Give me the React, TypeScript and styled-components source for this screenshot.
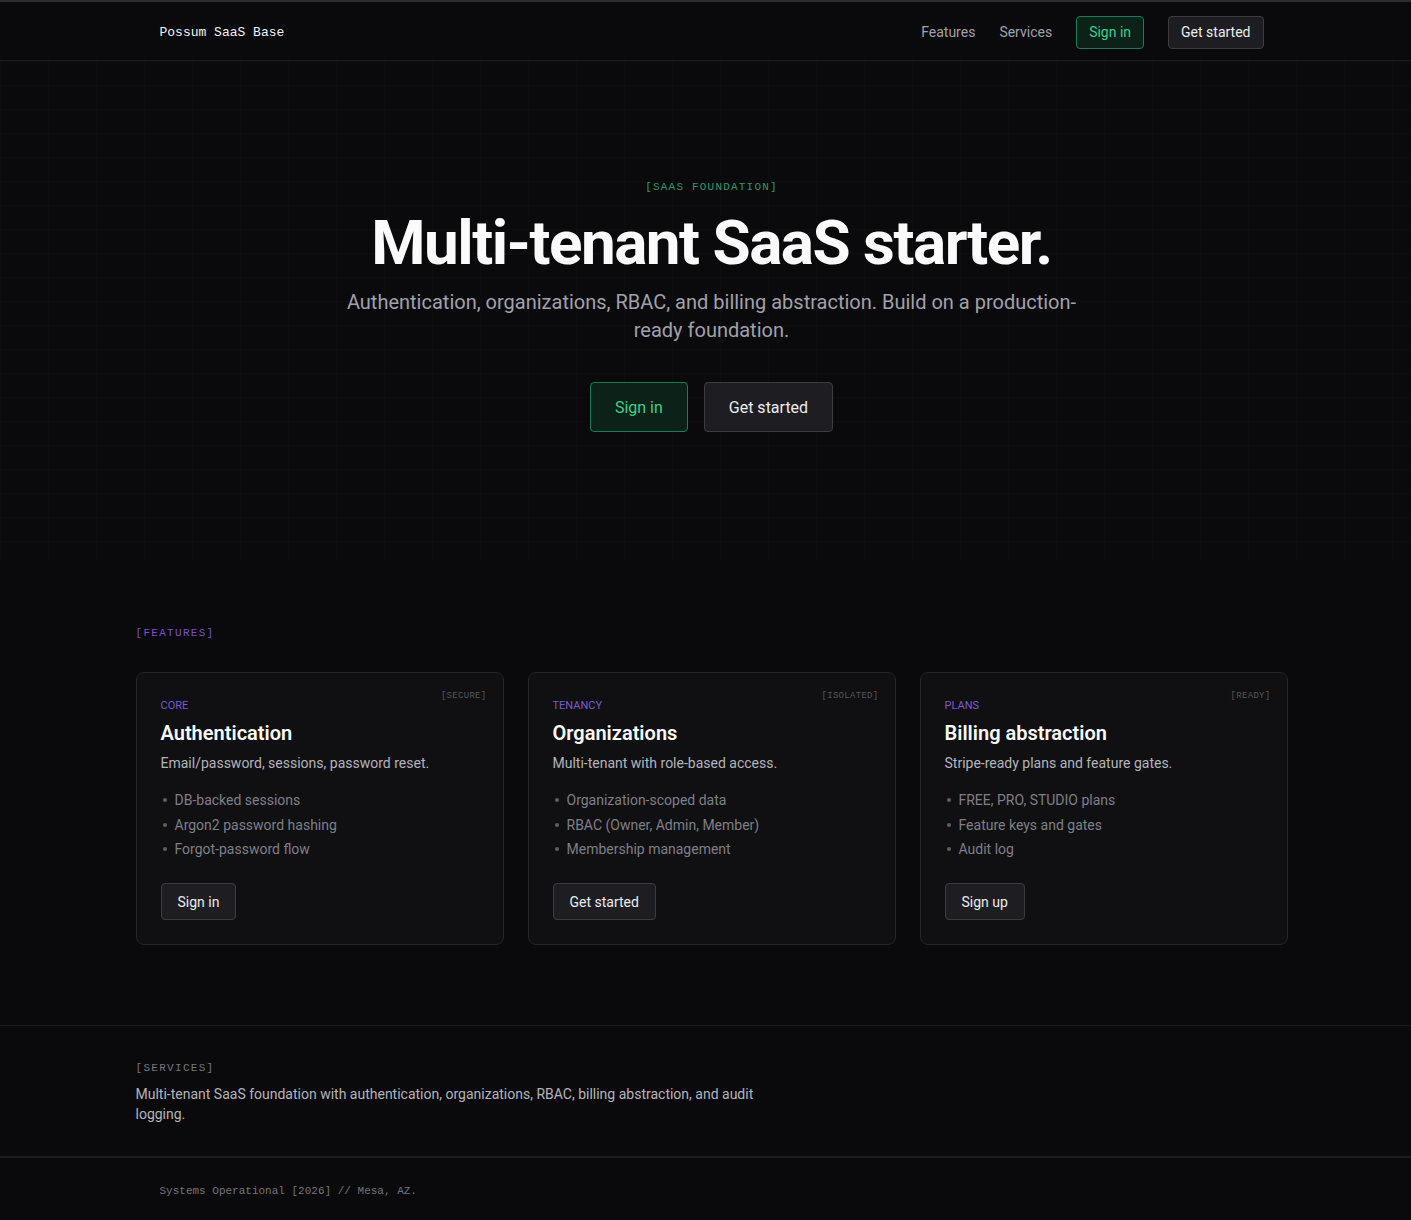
import React from 'react';
import styled, { createGlobalStyle } from 'styled-components';

const GlobalStyle = createGlobalStyle`
  * { box-sizing: border-box; }
  html, body {
    margin: 0;
    padding: 0;
    background: #0a0a0c;
    color: #ededf0;
    font-family: 'Segoe UI', Roboto, 'Noto Sans', sans-serif;
  }
  body { border-top: 2px solid #2c2c30; }
`;

const mono = `'Liberation Mono', 'DejaVu Sans Mono', monospace`;

const Container = styled.div`
  width: 1152px;
  margin-left: calc(50% - 570px);
`;

const Header = styled.header`
  height: 59px;
  border-bottom: 1px solid #1b1b1f;
`;

const HeaderInner = styled(Container)`
  height: 100%;
  padding: 2px 24px 0;
  display: flex;
  align-items: center;
  justify-content: space-between;
`;

const Logo = styled.a`
  font-family: ${mono};
  font-size: 13px;
  color: #f4f4f5;
  text-decoration: none;
`;

const Nav = styled.nav`
  display: flex;
  align-items: center;
  gap: 24px;
`;

const NavLink = styled.a`
  font-size: 14px;
  color: #a1a1aa;
  text-decoration: none;
`;

const Button = styled.a<{ $variant?: 'accent' | 'default'; $size?: 'sm' | 'md' | 'lg' }>`
  display: inline-flex;
  align-items: center;
  justify-content: center;
  border-radius: 4px;
  text-decoration: none;
  border: 1px solid ${(p) => (p.$variant === 'accent' ? '#1d7a52' : '#3b3b42')};
  background: ${(p) => (p.$variant === 'accent' ? '#0c2219' : '#1e1e22')};
  color: ${(p) => (p.$variant === 'accent' ? '#3ecf8e' : '#ececef')};
  font-size: ${(p) => (p.$size === 'lg' ? '16px' : '14px')};
  height: ${(p) => (p.$size === 'lg' ? '50px' : p.$size === 'md' ? '37px' : '33px')};
  padding: 0 ${(p) => (p.$size === 'lg' ? '24px' : p.$size === 'md' ? '16px' : '12px')};
`;

const Hero = styled.section`
  padding: 118px 0 127px;
  text-align: center;
  background-image:
    linear-gradient(rgba(255, 255, 255, 0.01) 1px, transparent 1px),
    linear-gradient(90deg, rgba(255, 255, 255, 0.01) 1px, transparent 1px);
  background-size: 48px 24px;
`;

const Kicker = styled.div<{ $tone: 'green' | 'purple' | 'gray' }>`
  font-family: ${mono};
  font-size: 11px;
  line-height: 16px;
  letter-spacing: ${(p) => (p.$tone === 'green' ? '1.2px' : '1.3px')};
  color: ${(p) => (p.$tone === 'green' ? '#2d9a69' : p.$tone === 'purple' ? '#7650d0' : '#76767e')};
`;

const Title = styled.h1`
  margin: 12px 0 0;
  font-size: 62px;
  line-height: 72px;
  font-weight: 700;
  letter-spacing: -1.5px;
  color: #fafafa;
`;

const Lead = styled.p`
  margin: 9px auto 0;
  max-width: 740px;
  font-size: 20px;
  line-height: 28px;
  color: #a1a1aa;
`;

const Actions = styled.div`
  margin-top: 38px;
  display: flex;
  justify-content: center;
  gap: 16px;
`;

const Features = styled.section`
  padding: 66px 0 80px;
`;

const Cards = styled.div`
  margin-top: 31px;
  display: grid;
  grid-template-columns: repeat(3, 1fr);
  gap: 24px;
`;

const Card = styled.article`
  position: relative;
  padding: 25px 24px 24px;
  border: 1px solid #25252a;
  border-radius: 8px;
  background: #101013;
`;

const Badge = styled.span`
  position: absolute;
  top: 18px;
  right: 16px;
  font-family: ${mono};
  font-size: 9px;
  letter-spacing: 0.3px;
  color: #55555c;
`;

const Eyebrow = styled.div`
  font-size: 11px;
  line-height: 16px;
  color: #7a5bd0;
  text-transform: uppercase;
`;

const CardTitle = styled.h3`
  margin: 5px 0 0;
  font-size: 20px;
  line-height: 28px;
  font-weight: 600;
  color: #fafafa;
`;

const CardText = styled.p`
  margin: 6px 0 0;
  font-size: 14px;
  line-height: 20px;
  color: #b4b4bb;
`;

const List = styled.ul`
  margin: 17px 0 24px;
  padding: 0;
  list-style: none;
  display: flex;
  flex-direction: column;
  gap: 4.5px;
`;

const Item = styled.li`
  display: flex;
  align-items: center;
  gap: 8px;
  font-size: 14px;
  line-height: 20px;
  color: #7f7f87;
  &::before {
    content: '';
    width: 4px;
    height: 4px;
    border-radius: 50%;
    background: #5d5d64;
    margin-left: 2px;
  }
`;

const Services = styled.section`
  border-top: 1px solid #1b1b1f;
  padding: 34px 0 32px;
`;

const ServicesText = styled.p`
  margin: 8px 0 0;
  max-width: 640px;
  font-size: 14px;
  line-height: 20px;
  color: #b4b4bb;
`;

const Footer = styled.footer`
  border-top: 2px solid #1e1e22;
  padding: 25px 0 26px;
`;

const FooterText = styled(Container)`
  padding: 0 24px;
  font-family: ${mono};
  font-size: 11px;
  line-height: 16px;
  color: #74747b;
`;

const features = [
  {
    eyebrow: 'Core',
    badge: '[SECURE]',
    title: 'Authentication',
    text: 'Email/password, sessions, password reset.',
    items: ['DB-backed sessions', 'Argon2 password hashing', 'Forgot-password flow'],
    cta: 'Sign in',
  },
  {
    eyebrow: 'Tenancy',
    badge: '[ISOLATED]',
    title: 'Organizations',
    text: 'Multi-tenant with role-based access.',
    items: ['Organization-scoped data', 'RBAC (Owner, Admin, Member)', 'Membership management'],
    cta: 'Get started',
  },
  {
    eyebrow: 'Plans',
    badge: '[READY]',
    title: 'Billing abstraction',
    text: 'Stripe-ready plans and feature gates.',
    items: ['FREE, PRO, STUDIO plans', 'Feature keys and gates', 'Audit log'],
    cta: 'Sign up',
  },
];

const App: React.FC = () => {
  return (
    <>
      <GlobalStyle />
      <Header>
        <HeaderInner>
          <Logo href='#'>Possum SaaS Base</Logo>
          <Nav>
            <NavLink href='#features'>Features</NavLink>
            <NavLink href='#services'>Services</NavLink>
            <Button $variant='accent' href='#'>Sign in</Button>
            <Button href='#'>Get started</Button>
          </Nav>
        </HeaderInner>
      </Header>

      <Hero>
        <Container>
          <Kicker $tone='green'>[SAAS FOUNDATION]</Kicker>
          <Title>Multi-tenant SaaS starter.</Title>
          <Lead>
            Authentication, organizations, RBAC, and billing abstraction. Build on a production-ready foundation.
          </Lead>
          <Actions>
            <Button $variant='accent' $size='lg' href='#'>Sign in</Button>
            <Button $size='lg' href='#'>Get started</Button>
          </Actions>
        </Container>
      </Hero>

      <Features id='features'>
        <Container>
          <Kicker $tone='purple'>[FEATURES]</Kicker>
          <Cards>
            {features.map((f) => (
              <Card key={f.title}>
                <Badge>{f.badge}</Badge>
                <Eyebrow>{f.eyebrow}</Eyebrow>
                <CardTitle>{f.title}</CardTitle>
                <CardText>{f.text}</CardText>
                <List>
                  {f.items.map((item) => (
                    <Item key={item}>{item}</Item>
                  ))}
                </List>
                <Button $size='md' href='#'>{f.cta}</Button>
              </Card>
            ))}
          </Cards>
        </Container>
      </Features>

      <Services id='services'>
        <Container>
          <Kicker $tone='gray'>[SERVICES]</Kicker>
          <ServicesText>
            Multi-tenant SaaS foundation with authentication, organizations, RBAC, billing abstraction, and audit
            logging.
          </ServicesText>
        </Container>
      </Services>

      <Footer>
        <FooterText>Systems Operational [2026] // Mesa, AZ.</FooterText>
      </Footer>
    </>
  );
};

export default App;
